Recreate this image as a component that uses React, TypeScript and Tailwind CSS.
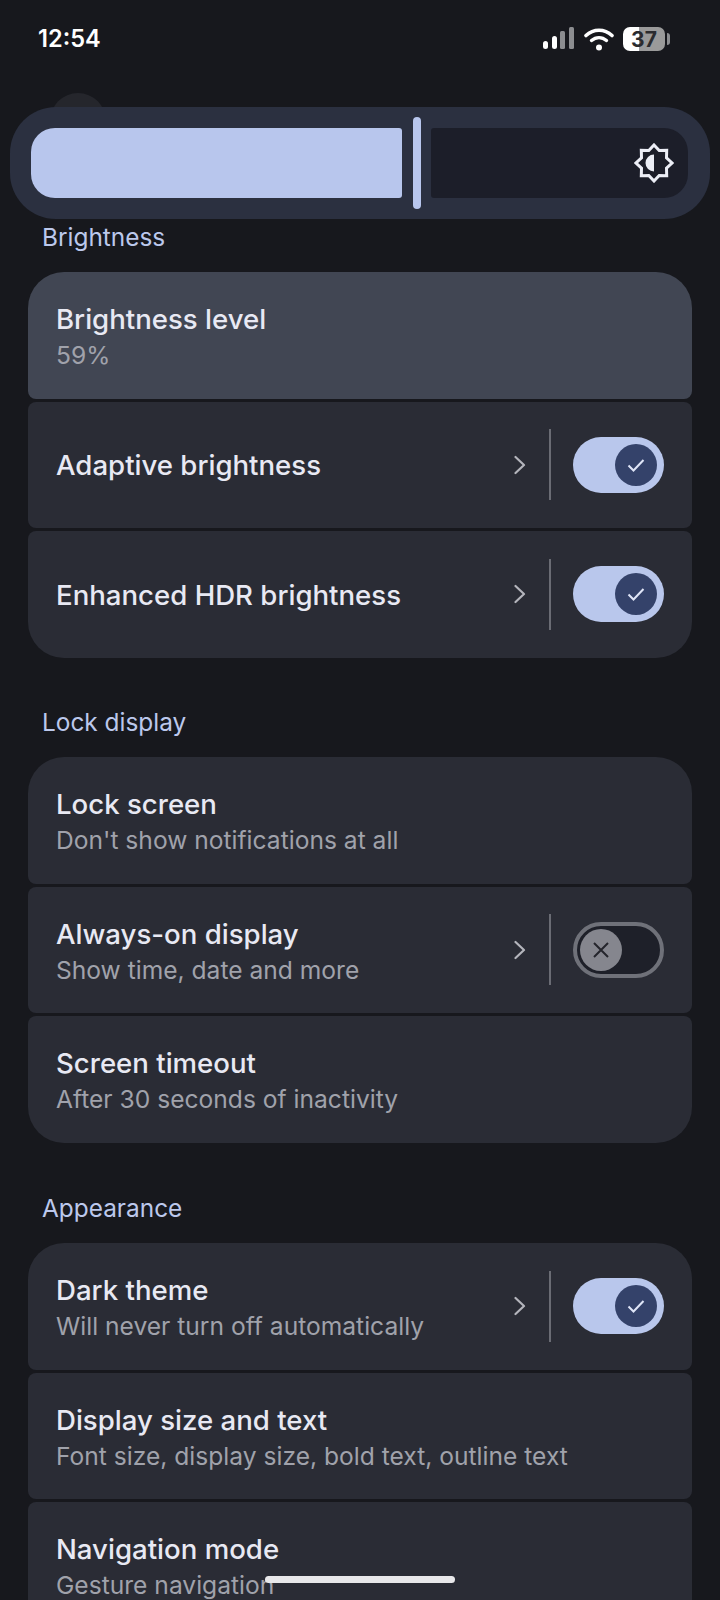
const Chevron = () => (
  <svg width="12" height="20" viewBox="0 0 12 20" fill="none" className="mr-[23px]">
    <path d="M1.5 2l8.5 8-8.5 8" stroke="#b4b5bc" strokeWidth="2.2" strokeLinecap="round" strokeLinejoin="round" />
  </svg>
);

const Toggle = ({ on }: { on: boolean }) => {
  if (on) {
    return (
      <span className="flex h-[56px] w-[91px] items-center justify-end rounded-full bg-[#b9c7ec] pr-[7px]">
        <span className="flex h-[42px] w-[42px] items-center justify-center rounded-full bg-[#34426a]">
          <svg width="22" height="22" viewBox="0 0 22 22" fill="none">
            <path d="M3.5 11.5l5 5L18.5 6" stroke="#dfe5f7" strokeWidth="2" />
          </svg>
        </span>
      </span>
    );
  }
  return (
    <span className="flex h-[56px] w-[91px] items-center rounded-full border-[4px] border-[#6f7179] bg-[#1e2029] pl-[3px]">
      <span className="flex h-[42px] w-[42px] items-center justify-center rounded-full bg-[#85868e]">
        <svg width="20" height="20" viewBox="0 0 20 20" fill="none">
          <path d="M3 3l14 14M17 3L3 17" stroke="#24252c" strokeWidth="2" />
        </svg>
      </span>
    </span>
  );
};

type RowProps = {
  title: string;
  sub?: string;
  toggle?: boolean;
  active?: boolean;
  first?: boolean;
  last?: boolean;
};

const Row = ({ title, sub, toggle, active, first, last }: RowProps) => {
  return (
    <div
      className={`flex h-[126.5px] items-center pl-[28px] pr-[28px] ${active ? "bg-[#414653]" : "bg-[#2a2c35]"} ${first ? "rounded-t-[36px]" : "rounded-t-[8px]"} ${last ? "rounded-b-[36px]" : "rounded-b-[8px]"}`}
    >
      <div className={`flex-1 ${sub ? "pt-[5px]" : "pt-[2px]"}`}>
        <div className="text-[27.6px] leading-[35px] font-[450] text-[#e8e9f3]">{title}</div>
        {sub && <div className="text-[24.6px] leading-[36px] text-[#a0a2ab]">{sub}</div>}
      </div>
      {toggle !== undefined && (
        <div className="flex items-center">
          <Chevron />
          <span className="mr-[22px] h-[71px] w-[2px] bg-[#6a6c74]" />
          <Toggle on={toggle} />
        </div>
      )}
    </div>
  );
};

const Label = ({ text }: { text: string }) => (
  <div className="mb-[17px] h-[36px] pl-[42px] text-[24.4px] leading-[36px] text-[#bcc8ec]">{text}</div>
);

const StatusIcons = () => (
  <div className="flex items-center">
    <svg width="32" height="24" viewBox="0 0 32 24" className="mr-[9px]">
      <rect x="0" y="14" width="5" height="8" rx="2.5" fill="#fff" />
      <rect x="9" y="9" width="5" height="13" rx="2.5" fill="#fff" />
      <rect x="17" y="4" width="5" height="18" rx="1.5" fill="#8c8d90" />
      <rect x="26" y="0" width="5" height="22" rx="1.5" fill="#8c8d90" />
    </svg>
    <svg width="30" height="24" viewBox="0 0 30 24" fill="none" className="mr-[9px]">
      <path d="M2 8.5C9.5 1.5 20.5 1.5 28 8.5" stroke="#fff" strokeWidth="3.6" strokeLinecap="round" />
      <path d="M7.5 13.5C12 9.6 18 9.6 22.5 13.5" stroke="#fff" strokeWidth="3.4" strokeLinecap="round" />
      <circle cx="15" cy="20.5" r="3" fill="#fff" />
    </svg>
    <div className="flex h-[24px] w-[42px] items-center justify-center rounded-[7px] bg-[linear-gradient(90deg,#ffffff_38%,#9a9a9a_38%)] text-[21px] font-bold leading-none text-[#2b2b2e]">
      37
    </div>
    <span className="ml-[2px] h-[12px] w-[3px] rounded-r-full bg-[#8c8d90]" />
  </div>
);

const App = () => {
  return (
    <div className="relative h-[1600px] overflow-hidden bg-[#17181d] font-['Inter',sans-serif]">
      <div className="flex h-[107px] items-start justify-between pt-[24px] pl-[38px] pr-[50px]">
        <span className="text-[23.6px] leading-[29px] font-semibold text-white">12:54</span>
        <div className="pt-[3px]">
          <StatusIcons />
        </div>
      </div>

      {/* back button sits under the slider */}
      <div className="absolute left-[50px] top-[93px] h-[56px] w-[56px] rounded-full bg-[#25262c]" />

      <div className="relative mx-[10px] flex h-[112px] items-center gap-[10.5px] rounded-[46px] bg-[#2b3040] pl-[21px]">
        <div className="h-[70px] w-[371px] rounded-l-[24px] rounded-r-[3px] bg-[#b8c6ed]" />
        <div className="h-[92px] w-[8px] rounded-full bg-[#b8c6ed]" />
        <div className="flex h-[70px] w-[257px] items-center justify-end rounded-l-[3px] rounded-r-[24px] bg-[#1c1e29] pr-[14px]">
          <svg width="40" height="40" viewBox="0 0 40 40" fill="none">
            <polygon
              points="20,2 25.2,7.5 32.7,7.3 32.5,14.8 38,20 32.5,25.2 32.7,32.7 25.2,32.5 20,38 14.8,32.5 7.3,32.7 7.5,25.2 2,20 7.5,14.8 7.3,7.3 14.8,7.5"
              stroke="#eceef6"
              strokeWidth="3"
              strokeLinejoin="miter"
            />
            <path d="M20 11.5a8.5 8.5 0 0 0 0 17z" fill="#eceef6" />
          </svg>
        </div>
      </div>

      <Label text="Brightness" />
      <div className="mx-[28px] flex flex-col gap-[3px]">
        <Row title="Brightness level" sub="59%" active first />
        <Row title="Adaptive brightness" toggle={true} />
        <Row title="Enhanced HDR brightness" toggle={true} last />
      </div>

      <div className="mt-[46px] pb-[0.5px]">
        <Label text="Lock display" />
      </div>
      <div className="mx-[28px] flex flex-col gap-[3px]">
        <Row title="Lock screen" sub="Don't show notifications at all" first />
        <Row title="Always-on display" sub="Show time, date and more" toggle={false} />
        <Row title="Screen timeout" sub="After 30 seconds of inactivity" last />
      </div>

      <div className="mt-[47px] pb-[0.5px]">
        <Label text="Appearance" />
      </div>
      <div className="mx-[28px] flex flex-col gap-[3px]">
        <Row title="Dark theme" sub="Will never turn off automatically" toggle={true} first />
        <Row title="Display size and text" sub="Font size, display size, bold text, outline text" />
        <Row title="Navigation mode" sub="Gesture navigation" />
      </div>

      <div className="absolute left-[265px] top-[1576px] h-[7px] w-[190px] rounded-full bg-[#e8e8ea]" />
    </div>
  );
};

export default App;
